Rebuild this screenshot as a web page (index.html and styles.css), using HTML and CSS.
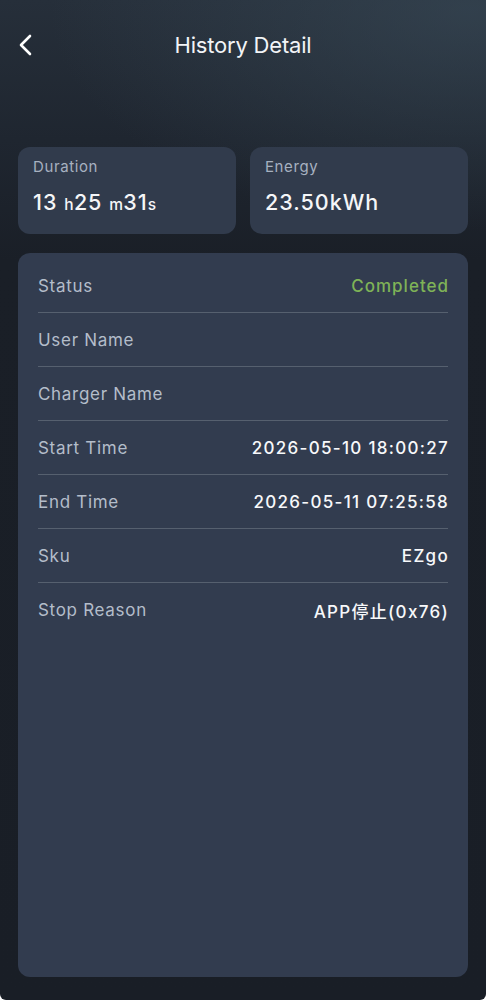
FILE: index.html
```html
<!DOCTYPE html>
<html lang="en">
<head>
    <meta charset="UTF-8">
    <meta name="viewport" content="width=device-width, initial-scale=1.0">
    <title>History Detail</title>
    <link rel="stylesheet" href="styles.css">
</head>
<body>
    <div class="screen">
        <header class="topbar">
            <button class="back" aria-label="Back">
                <svg width="14" height="22" viewBox="0 0 14 22"><path d="M12 2 L3 11 L12 20" fill="none" stroke="#fff" stroke-width="2.6" stroke-linecap="round" stroke-linejoin="round"/></svg>
            </button>
            <h1>History Detail</h1>
        </header>

        <div class="stats">
            <div class="stat">
                <div class="stat-label">Duration</div>
                <div class="stat-value">13 <small>h</small>25 <small>m</small>31<small>s</small></div>
            </div>
            <div class="stat">
                <div class="stat-label">Energy</div>
                <div class="stat-value">23.50kWh</div>
            </div>
        </div>

        <div class="detail">
            <div class="row"><span class="key">Status</span><span class="val done">Completed</span></div>
            <div class="row"><span class="key">User Name</span><span class="val"></span></div>
            <div class="row"><span class="key">Charger Name</span><span class="val"></span></div>
            <div class="row"><span class="key">Start Time</span><span class="val">2026-05-10 18:00:27</span></div>
            <div class="row"><span class="key">End Time</span><span class="val">2026-05-11 07:25:58</span></div>
            <div class="row"><span class="key">Sku</span><span class="val">EZgo</span></div>
            <div class="row last"><span class="key">Stop Reason</span><span class="val">APP停止(0x76)</span></div>
        </div>
    </div>
</body>
</html>
```

FILE: styles.css
```css
html {
    background: #fff;
}
body {
    margin: 0;
    font-family: Inter, 'Noto Sans', 'Noto Sans CJK SC', sans-serif;
    color: #fff;
}
.screen {
    height: 1000px;
    box-sizing: border-box;
    padding: 0 18px 23px;
    display: flex;
    flex-direction: column;
    border-radius: 0 0 6px 6px;
    background:
        radial-gradient(ellipse 420px 220px at 470px 10px, rgba(60, 78, 92, 0.55), rgba(60, 78, 92, 0) 100%),
        linear-gradient(180deg, #262f3a 0px, #1f2630 140px, #1a1f27 260px, #191e26 100%);
}
.topbar {
    height: 92px;
    position: relative;
    display: flex;
    align-items: center;
    justify-content: center;
}
.topbar h1 {
    margin: 0 0 2px;
    font-size: 22px;
    font-weight: 400;
    letter-spacing: -0.2px;
    color: #f2f4f7;
}
.back {
    position: absolute;
    left: 0;
    top: 34px;
    background: none;
    border: 0;
    padding: 0;
}
.back svg {
    display: block;
}
.stats {
    margin-top: 55px;
    display: grid;
    grid-template-columns: 1fr 1fr;
    gap: 14px;
}
.stat {
    background: #313b4c;
    border-radius: 12px;
    height: 87px;
    padding: 10px 15px 0;
    box-sizing: border-box;
}
.stat-label {
    font-size: 15px;
    color: #a7b1c0;
    letter-spacing: 0.6px;
}
.stat-value {
    margin-top: 13px;
    font-size: 21.5px;
    font-weight: 500;
    letter-spacing: 1px;
    color: #f5f6f8;
}
.stat-value small {
    font-size: 15.5px;
    font-weight: 500;
    letter-spacing: 0.4px;
}
.detail {
    margin-top: 19px;
    flex: 1;
    background: #323c4f;
    border-radius: 12px;
    padding: 6px 20px 0;
}
.row {
    height: 54px;
    box-sizing: border-box;
    display: flex;
    align-items: center;
    justify-content: space-between;
    border-bottom: 1px solid #56606f;
    font-size: 17px;
}
.row.last {
    border-bottom: 0;
}
.key {
    color: #b4bdca;
    letter-spacing: 0.7px;
}
.val {
    font-weight: 500;
    letter-spacing: 1.3px;
    margin-right: -1px;
    color: #f7f8fa;
}
.val.done {
    color: #7fb357;
    letter-spacing: 1px;
}
```
